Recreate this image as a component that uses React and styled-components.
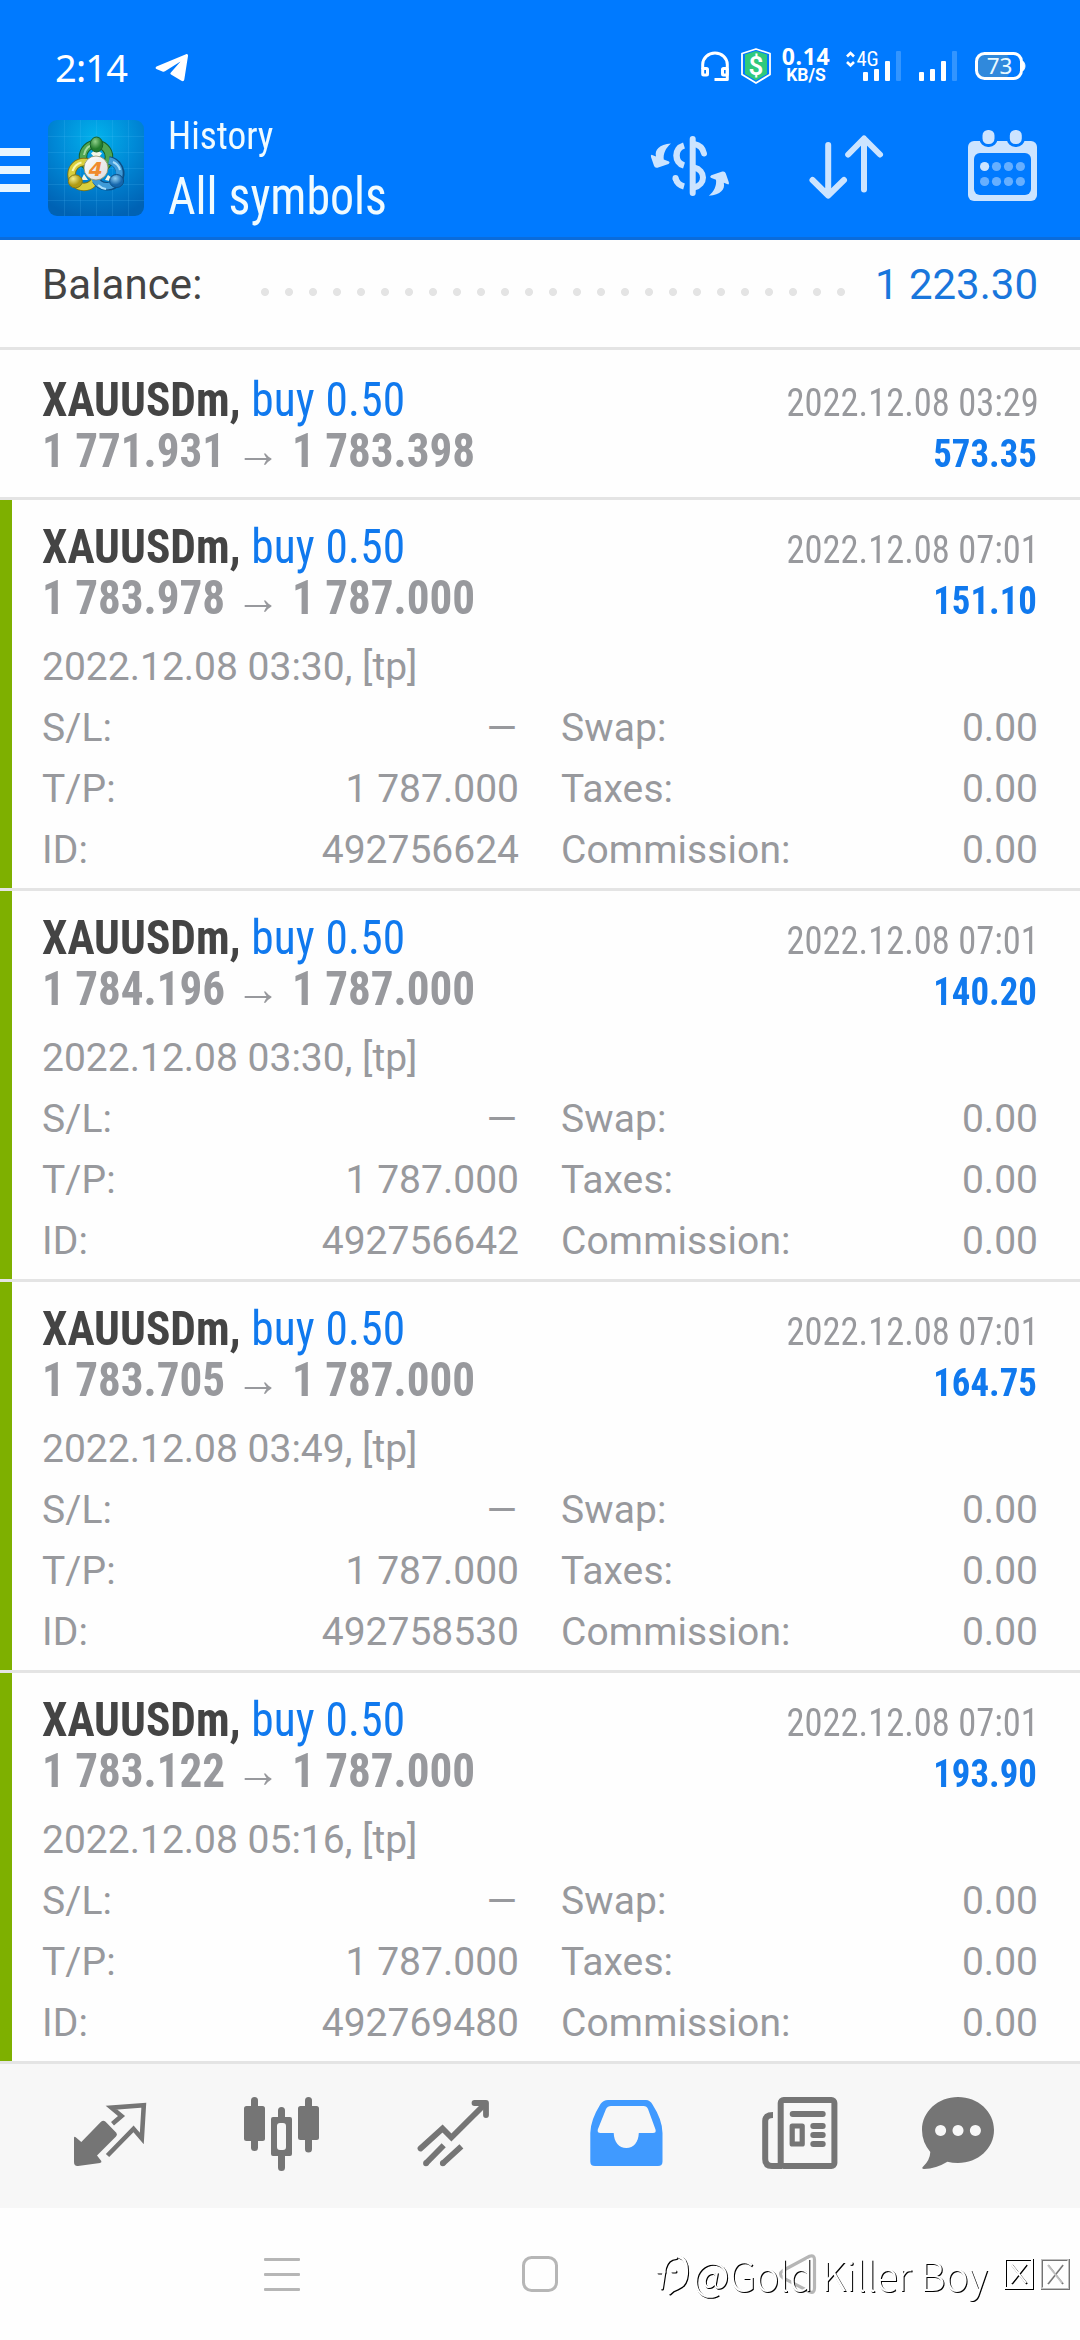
import React from "react";
import styled, { createGlobalStyle } from "styled-components";

const color = {
  header: "#007aff",
  headerEdge: "#0a6cdc",
  tint: "#cce4ff",
  ink: "#444444",
  blue: "#1079ee",
  balance: "#1976dc",
  grey: "#98999d",
  line: "#e4e4e4",
  green: "#7eb000",
  icon: "#757575",
  active: "#409aff",
  nav: "#b6b6b6",
};

const condensed = `"Roboto Condensed", Roboto, sans-serif`;

const GlobalStyle = createGlobalStyle`
  *, *::before, *::after { box-sizing: border-box; }
  body { margin: 0; background: #fefefe; font-family: Roboto, sans-serif; }
  svg { display: block; flex: none; }
`;

const Screen = styled.div`
  display: flex;
  flex-direction: column;
  width: 1080px;
  height: 2340px;
  overflow: hidden;
  background: #fefefe;
`;

/* ---------- header ---------- */

const Header = styled.header`
  display: flex;
  flex-direction: column;
  height: 240px;
  background: ${color.header};
  border-bottom: 3px solid ${color.headerEdge};
`;

const StatusBar = styled.div`
  display: flex;
  align-items: center;
  height: 104px;
  padding: 28px 54px 0 55px;
  color: #fff;
  font-family: "Noto Sans", sans-serif;
`;

const Clock = styled.span`
  margin: 2px 28px 0 0;
  font-size: 38px;
  line-height: 48px;
  letter-spacing: -0.8px;
`;

const StatusIcons = styled.div`
  display: flex;
  align-items: center;
  margin-left: auto;
`;

const Speed = styled.div`
  display: flex;
  flex-direction: column;
  align-items: center;
  width: 50px;
  margin: 0 14px 0 10px;
  font-weight: 700;
  white-space: nowrap;
`;

const SpeedValue = styled.span`
  font-size: 23px;
  line-height: 19px;
  letter-spacing: 0.6px;
`;

const SpeedUnit = styled.span`
  font-family: Roboto, sans-serif;
  font-size: 17.5px;
  line-height: 19px;
`;

const AppBar = styled.div`
  display: flex;
  align-items: center;
  height: 133px;
  padding: 0 42px 5px 0;
`;

const MenuButton = styled.div`
  display: flex;
  flex-direction: column;
  gap: 10px;
  width: 30px;
  margin: 4px 18px 0 0;
`;

const MenuBar = styled.span`
  height: 8px;
  background: #e8f6ff;
`;

const Titles = styled.div`
  display: flex;
  flex-direction: column;
  margin-left: 24px;
  color: #f0fbff;
  font-family: ${condensed};
`;

const Overline = styled.span`
  font-size: 39px;
  line-height: 58px;
  transform: scaleX(0.957);
  transform-origin: left;
`;

const Title = styled.h1`
  margin: 0;
  font-size: 51px;
  font-weight: 400;
  line-height: 64px;
  transform: scaleX(0.939);
  transform-origin: left;
`;

const Tools = styled.div`
  display: flex;
  align-items: center;
  gap: 80px;
  margin: -4px 0 0 auto;
`;

/* ---------- balance ---------- */

const BalanceRow = styled.section`
  display: flex;
  height: 110px;
  padding: 15px 42px 0;
  border-bottom: 3px solid ${color.line};
  font-size: 42px;
  line-height: 60px;
`;

const BalanceLabel = styled.span`
  width: 211px;
  color: ${color.ink};
  letter-spacing: 0.1px;
`;

const Leader = styled.span`
  width: 600px;
  height: 24px;
  margin-top: 25px;
  background: radial-gradient(circle, ${color.line} 3.6px, transparent 4.4px) 0 0 / 24px 24px;
`;

const BalanceValue = styled.span`
  margin-left: auto;
  color: ${color.balance};
`;

/* ---------- deals ---------- */

const Deal = styled.article`
  padding: ${(p) => (p.$open ? "21px 42px 9px" : "24px 42px 21px")};
  border-bottom: 3px solid ${color.line};
  box-shadow: ${(p) => (p.$open ? `inset 12px 0 0 ${color.green}` : "none")};
`;

const Line = styled.div`
  display: flex;
  align-items: baseline;
  justify-content: space-between;
  height: 51px;
  font-family: ${condensed};
  font-size: 48px;
  line-height: 51px;
  white-space: pre;
`;

const Instrument = styled.span`
  transform: scaleX(0.945);
  transform-origin: left;
`;

const SymbolName = styled.b`
  color: ${color.ink};
`;

const Side = styled.span`
  color: ${color.blue};
  letter-spacing: 0.2px;
`;

const Prices = styled.b`
  color: ${color.grey};
  transform: scaleX(0.94);
  transform-origin: left;
`;

const Arrow = styled.span`
  margin-right: 1px;
`;

const ClosedAt = styled.time`
  margin-right: -1px;
  color: ${color.grey};
  font-size: 39px;
  transform: scaleX(0.935);
  transform-origin: right;
`;

const Profit = styled.b`
  margin-right: 1px;
  color: ${color.blue};
  font-size: 39px;
  transform: scaleX(0.943);
  transform-origin: right;
`;

const Details = styled.div`
  padding-top: 14px;
  color: ${color.grey};
  font-size: 39px;
  line-height: 61px;
`;

const Columns = styled.dl`
  display: grid;
  grid-template-columns: 1fr 1fr;
  grid-template-rows: 61px 61px 59px;
  column-gap: 42px;
  margin: 0;
`;

const Field = styled.div`
  display: flex;
  justify-content: space-between;
  line-height: ${(p) => (p.$last ? "60px" : "61px")};
`;

const Label = styled.dt`
  letter-spacing: 0.1px;
`;

const Value = styled.dd`
  margin: 0;
  padding-right: ${(p) => (p.$empty ? "2px" : "0")};
`;

/* ---------- bottom ---------- */

const TabBar = styled.nav`
  display: grid;
  grid-template-columns: repeat(6, 1fr);
  align-items: center;
  justify-items: center;
  height: 144px;
  padding: 0 24px;
  background: #f7f7f7;
`;

const SystemBar = styled.footer`
  position: relative;
  display: grid;
  grid-template-columns: repeat(3, 258px);
  align-items: center;
  justify-items: center;
  justify-content: center;
  height: 132px;
`;

const Watermark = styled.div`
  position: absolute;
  top: 38px;
  left: 655px;
  display: flex;
  align-items: center;
  height: 56px;
  color: #fff;
  font-family: "Noto Sans CJK SC", sans-serif;
  font-size: 40px;
  font-weight: 300;
  line-height: 56px;
  letter-spacing: -0.41px;
  white-space: nowrap;
  filter: drop-shadow(1px 1px 0 #000);
`;

const WatermarkName = styled.span`
  margin: 0 17px 0 2px;
`;

/* ---------- icons ---------- */

const TelegramIcon = () => (
  <svg width="34" height="36" viewBox="0 0 34 36" fill="#fff">
    <path d="M1.5 18.5 31 6.2c1.2-.4 2.200.3 2 1.800L29.300 31.500c-.3 1.700-1.500 2.100-2.900 1.200L16 26.500c-.8-.6-.8-1.300-.1-2L25.500 13.500 10 23.300c-.8.5-1.700.5-2.600.2L1.900 21.300c-1.600-.6-1.700-1.900-.4-2.800z" />
  </svg>
);

const HeadsetIcon = () => (
  <svg width="28" height="36" viewBox="0 0 28 36" fill="none" stroke="#fff" strokeWidth="3">
    <path d="M1.700 21V16.500A12.300 11.500 0 0 1 26.300 16.500V31.500H13.500" strokeLinejoin="round" />
    <rect x="1.700" y="20.500" width="4.800" height="6.500" rx="1" />
    <rect x="21.500" y="20.500" width="4.800" height="6.500" rx="1" />
  </svg>
);

const ShieldIcon = () => (
  <svg width="30" height="36" viewBox="0 0 30 36">
    <path d="M15 1 29 5.500V26.500L15 35 1 26.500V5.500z" fill="none" stroke="#fff" strokeWidth="1.800" strokeLinejoin="round" />
    <path d="M15 3 26 6.500V26L15 32.500 4 26V6.500z" fill="#2fc97c" />
    <text x="15" y="27.200" textAnchor="middle" fill="#fff" fontFamily="Roboto" fontWeight="600" fontSize="26">$</text>
  </svg>
);

const SignalBars = ({ network }) => (
  <svg width={network ? 58 : 39} height="36" viewBox={network ? "0 0 58 36" : "17 0 39 36"} fill="#fff">
    {network && (
      <>
        <path d="M2 8.500 5.500 5 9 8.500M2 14 5.500 17.500 9 14" fill="none" stroke="#fff" strokeWidth="2.600" />
        <text x="11.500" y="18.300" fontFamily="Roboto Condensed" fontSize="20.500">{network}</text>
      </>
    )}
    <rect x="18" y="24" width="5" height="9" rx="1" />
    <rect x="29" y="21" width="5" height="12" rx="1" />
    <rect x="40" y="13" width="5" height="20" rx="1" />
    <rect x="51" y="3" width="5" height="30" rx="1" fill="#3395ff" />
  </svg>
);

const BatteryIcon = ({ level }) => (
  <svg width="51" height="36" viewBox="0 0 51 36">
    <rect x="3" y="5.500" width="31" height="25" rx="6" fill="#3089dc" />
    <rect x="1.500" y="5.500" width="45" height="25" rx="8" fill="none" stroke="#fff" strokeWidth="3" />
    <path d="M48 13.500c2.600 1.500 2.600 7.500 0 9z" fill="#fff" stroke="#fff" />
    <text x="24.500" y="25.500" textAnchor="middle" fill="#eafaff" fontFamily="Noto Sans" fontSize="22.500">{level}</text>
  </svg>
);

const Logo = () => (
  <svg width="96" height="96" viewBox="0 0 96 96">
    <defs>
      <radialGradient id="sky" cx="50%" cy="18%" r="85%">
        <stop offset="0" stopColor="#02b2ec" />
        <stop offset="0.5" stopColor="#0088d6" />
        <stop offset="1" stopColor="#0062b4" />
      </radialGradient>
      <radialGradient id="leaf" cx="40%" cy="30%">
        <stop offset="0" stopColor="#8fd08a" />
        <stop offset="1" stopColor="#237c2c" />
      </radialGradient>
      <radialGradient id="gold" cx="35%" cy="30%">
        <stop offset="0" stopColor="#f4ee8a" />
        <stop offset="1" stopColor="#b09a14" />
      </radialGradient>
      <radialGradient id="wave" cx="40%" cy="30%">
        <stop offset="0" stopColor="#8fd0f4" />
        <stop offset="1" stopColor="#1566ac" />
      </radialGradient>
      <linearGradient id="disc" x1="0" y1="0" x2="1" y2="1">
        <stop offset="0" stopColor="#ffffff" />
        <stop offset="1" stopColor="#dcdcdc" />
      </linearGradient>
    </defs>
    <rect width="96" height="96" rx="9" fill="url(#sky)" />
    <path d="M16.500 0V96M32.500 0V96M48.500 0V96M64.500 0V96M80.500 0V96M0 16.500H96M0 32.500H96M0 48.500H96M0 64.500H96M0 80.500H96" stroke="#5cc8ff" strokeOpacity="0.16" />
    <g fill="none">
      <circle cx="48" cy="37" r="13" stroke="#17602a" strokeWidth="8.500" />
      <circle cx="48" cy="37" r="13" stroke="#4fa653" strokeWidth="6.500" />
      <path d="M36 35a12.500 12.500 0 0 1 11-11" stroke="#a6dba0" strokeWidth="2" />
      <circle cx="36" cy="54.500" r="12.500" stroke="#7d7414" strokeWidth="8.500" />
      <circle cx="36" cy="54.500" r="12.500" stroke="#d9cf3e" strokeWidth="6.500" />
      <path d="M24.500 51a12.500 12.500 0 0 1 9-8.500" stroke="#fbf8b0" strokeWidth="2" />
      <path d="M61 40.500A13 13 0 1 1 48 60" stroke="#0c4f86" strokeWidth="8.500" />
      <path d="M61 40.500A13 13 0 1 1 46 57" stroke="#3f9bd8" strokeWidth="6.500" />
      <path d="M65 42a12 12 0 0 1 7 8M50 65a14 14 0 0 0 8 4" stroke="#a9defa" strokeWidth="2" />
    </g>
    <path d="M43 33.500 48 29l6 4.500-3 3.500h-5zM33 60l3-6 4 6zM57 60l3-5 4 3-2 3z" fill="#f2f5e6" />
    <ellipse cx="48.500" cy="24.500" rx="6.300" ry="7.500" fill="url(#leaf)" stroke="#17602a" />
    <ellipse cx="27.300" cy="61.300" rx="7" ry="6.500" fill="url(#gold)" stroke="#857a18" />
    <ellipse cx="68.600" cy="61" rx="7" ry="6.500" fill="url(#wave)" stroke="#0c4f86" />
    <circle cx="48" cy="48" r="12" fill="url(#disc)" stroke="#8f8f6a" strokeWidth="0.800" />
    <text x="47.800" y="55.500" textAnchor="middle" fill="#f08a2c" fontFamily="DejaVu Sans" fontStyle="italic" fontWeight="700" fontSize="20">4</text>
  </svg>
);

const CurrencyIcon = () => (
  <svg width="80" height="60" viewBox="-5 0 80 60" overflow="visible">
    <g fill="none" stroke={color.tint} strokeWidth="6">
      <path d="M41.700 3V57" strokeLinecap="round" />
      <path d="M33 9.500C23 12.500 23 26.500 33 29.500" strokeWidth="6.500" />
      <path d="M24.500 42Q26 48.500 33 50.500" />
      <path d="M43 8Q51.500 9.500 53 17.500M24.500 42.500V42" strokeLinecap="round" />
      <path d="M43 31.500C55 34 55 49 43 51.500" />
    </g>
    <g fill={color.tint}>
      <path id="swapArrow" d="M20 7.500C8 8.500 3.500 14 5 20.500L.5 18.800Q-.5 19 0 21L3 29.800Q3.800 32.300 6.500 31.700L17.500 27.900Q19.500 26.700 18 25.500L12.800 23.500C12 18 14.500 12 20 7.500Z" />
      <use href="#swapArrow" transform="rotate(180 38.900 33.600)" />
    </g>
  </svg>
);

const SortIcon = () => (
  <svg width="80" height="68" viewBox="0 0 80 68" fill="none" stroke={color.tint} strokeWidth="6" strokeLinecap="round" strokeLinejoin="round">
    <path d="M22.200 13V62M6.500 48 22.200 63.500 38 48" />
    <path d="M58 57.500V7M42.200 22.500 58 6.500 74 22.500" />
  </svg>
);

const CalendarIcon = () => (
  <svg width="72" height="74" viewBox="0 0 72 74">
    <rect x="2" y="12" width="69" height="60" rx="6" fill={color.tint} />
    <rect x="8" y="24" width="57" height="42" rx="6" fill={color.header} />
    {[16.500, 43.800].map((x) => (
      <rect key={x} x={x - 1.500} y="-0.500" width="15" height="17" rx="7" fill={color.tint} stroke={color.header} strokeWidth="3" />
    ))}
    {[37.500, 52.500].map((y) =>
      [18.600, 30.500, 42.500, 54.400].map((x) => (
        <circle key={`${x}-${y}`} cx={x} cy={y} r="4.600" fill={x < 20 && y < 40 ? color.tint : "#66afff"} />
      ))
    )}
  </svg>
);

const TabSvg = styled.svg.attrs({ viewBox: "0 0 96 96", width: 96, height: 96 })`
  color: ${(p) => (p.$active ? color.active : color.icon)};
`;

const QuotesIcon = () => (
  <TabSvg fill="currentColor">
    <path d="M12 49.500Q12.500 48 14 49.500L19.300 54 39 33.800Q41.300 31.700 43.600 33.800L54.300 44.800Q55.800 46.700 54 48.600L35 67.500 39.300 73Q40 74.500 38 75L16 78Q12 78.300 12 74z" />
    <path d="M50.500 35.700 59.500 28 49.500 19.700 81.800 17.200 79.800 50.500 71.500 40.800 45.500 67.500" fill="none" stroke="currentColor" strokeWidth="4.600" strokeLinejoin="miter" />
  </TabSvg>
);

const ChartIcon = () => (
  <TabSvg fill="currentColor">
    <rect x="10" y="18" width="21" height="35" rx="2.500" />
    <rect x="17" y="9" width="7" height="54" rx="3.500" />
    <path fillRule="evenodd" d="M39 29H56Q58 29 58 31V66Q58 68 56 68H39Q37 68 37 66V31Q37 29 39 29ZM46 35Q43 35 43 38V59Q43 62 46 62H49Q52 62 52 59V38Q52 35 49 35Z" />
    <path d="M44 32V22.500A3.500 3.500 0 0 1 51 22.500V32zM44 65V79.500A3.500 3.500 0 0 0 51 79.500V65z" />
    <rect x="64" y="18" width="21" height="34" rx="2.500" />
    <rect x="71" y="9" width="7" height="55.500" rx="3.500" />
  </TabSvg>
);

const TradeIcon = () => (
  <TabSvg fill="none" stroke="currentColor" strokeWidth="5.800">
    <path d="M14.500 60.500 36.500 40.500 45.400 49.500 78.500 16.500" strokeLinecap="round" strokeLinejoin="miter" />
    <path d="M68.500 15H80V27" strokeLinecap="round" strokeLinejoin="round" />
    <path d="M20 75.300 37.700 57.300M36.800 75.300 55.400 58.300" />
    <path d="M20 75.300V75.200M36.800 75.300V75.200" strokeLinecap="round" />
  </TabSvg>
);

const HistoryIcon = () => (
  <TabSvg $active fill="currentColor">
    <path fillRule="evenodd" d="M30 12H68Q72 12 74.500 16.500Q84.500 32 84.500 45V73.500Q84.500 78 80 78H17Q12.300 78 12.300 73.500V45Q12.500 32 22.500 16Q25.500 12 30 12ZM33 18Q29.500 18 28 21L19.800 41.500Q19 45 22.500 45H35.700C36 54 41 60 48.300 60S60.500 54 60.800 45H75Q78.500 45 77.500 41.500L70 21Q68.800 18 65.500 18Z" />
  </TabSvg>
);

const NewsIcon = () => (
  <TabSvg fill="none" stroke="currentColor" strokeWidth="6">
    <rect x="30.700" y="12" width="53.700" height="66" rx="3" />
    <path d="M23 27Q15.200 27 15.200 33V71Q15.200 78 22 78H32" />
    <path d="M42.700 26H72.700M63.300 38H72.700M63.300 47H72.700M63.300 56H72.700" strokeLinecap="round" />
    <rect x="42.200" y="38" width="10" height="18" strokeWidth="5.200" strokeLinejoin="round" />
  </TabSvg>
);

const ChatIcon = () => (
  <TabSvg fill="currentColor">
    <path fillRule="evenodd" d="M36 9C56 9 72 23.500 72 42S56 75 36 75Q30.500 75 25.400 73.800Q14 80.800 2 81Q-1 80.500 1.200 78.500Q8 72 8.300 64Q0 54 0 42C0 23.500 16 9 36 9ZM18.600 37a5.500 5.500 0 1 0 .01 0ZM36 37a5.500 5.500 0 1 0 .01 0ZM53.400 37a5.500 5.500 0 1 0 .01 0Z" />
  </TabSvg>
);

const RecentsIcon = () => (
  <svg width="36" height="36" viewBox="0 0 36 36" fill={color.nav}>
    <rect y="2" width="36" height="3" rx="1" />
    <rect y="17" width="36" height="3" rx="1" />
    <rect y="32" width="36" height="3" rx="1" />
  </svg>
);

const HomeIcon = () => (
  <svg width="36" height="36" viewBox="0 0 36 36">
    <rect x="1.500" y="1.500" width="33" height="33" rx="8" fill="none" stroke={color.nav} strokeWidth="3" />
  </svg>
);

const BackIcon = () => (
  <svg width="60" height="60" viewBox="-2 0 60 60">
    <path d="M13 26.500 39.500 12.300Q44.500 10.500 44.500 16V44Q44.500 50 39.500 47.700L13 33.800Q8 30 13 26.500Z" fill="none" stroke={color.nav} strokeWidth="3.200" />
  </svg>
);

const NoteMark = () => (
  <svg width="36" height="44" viewBox="0 8 36 44" fill="none" stroke="#fff" strokeWidth="3" strokeLinecap="round" overflow="visible">
    <path d="M6.500 44 9.500 24Q12 14 21 13.500M24 12.500Q32.500 15 31.500 30Q30.500 41 22 44Q17 45.500 14.500 49" />
    <path d="M3 28H9M17 27H20" />
  </svg>
);

const MissingGlyph = styled.svg.attrs({ width: 36, height: 34, viewBox: "0 0 36 34" })`
  opacity: ${(p) => (p.$faint ? 0.55 : 1)};
`;

const GlyphBox = ({ faint }) => (
  <MissingGlyph $faint={faint} fill="none" stroke="#fff" strokeWidth="2">
    <rect x="1" y="2" width="27" height="29" />
    <path d="M7 7 22 26M22 7 7 26" />
  </MissingGlyph>
);

/* ---------- data ---------- */

const deals = [
  { open: "1 771.931", close: "1 783.398", closedAt: "2022.12.08 03:29", profit: "573.35" },
  { open: "1 783.978", close: "1 787.000", closedAt: "2022.12.08 07:01", profit: "151.10", note: "2022.12.08 03:30, [tp]", id: "492756624" },
  { open: "1 784.196", close: "1 787.000", closedAt: "2022.12.08 07:01", profit: "140.20", note: "2022.12.08 03:30, [tp]", id: "492756642" },
  { open: "1 783.705", close: "1 787.000", closedAt: "2022.12.08 07:01", profit: "164.75", note: "2022.12.08 03:49, [tp]", id: "492758530" },
  { open: "1 783.122", close: "1 787.000", closedAt: "2022.12.08 07:01", profit: "193.90", note: "2022.12.08 05:16, [tp]", id: "492769480" },
];

function DealRow({ deal }) {
  const fields = [
    ["S/L:", "—"],
    ["Swap:", "0.00"],
    ["T/P:", deal.close],
    ["Taxes:", "0.00"],
    ["ID:", deal.id],
    ["Commission:", "0.00"],
  ];
  return (
    <Deal $open={Boolean(deal.note)}>
      <Line>
        <Instrument>
          <SymbolName>XAUUSDm, </SymbolName>
          <Side>buy 0.50</Side>
        </Instrument>
        <ClosedAt>{deal.closedAt}</ClosedAt>
      </Line>
      <Line>
        <Prices>
          {deal.open} <Arrow>→</Arrow> {deal.close}
        </Prices>
        <Profit>{deal.profit}</Profit>
      </Line>
      {deal.note && (
        <Details>
          <div>{deal.note}</div>
          <Columns>
            {fields.map(([label, value], i) => (
              <Field key={label} $last={i > 3}>
                <Label>{label}</Label>
                <Value $empty={value === "—"}>{value}</Value>
              </Field>
            ))}
          </Columns>
        </Details>
      )}
    </Deal>
  );
}

const Gap = styled.div`
  margin-left: ${(p) => p.$size}px;
`;

export default function App() {
  return (
    <Screen>
      <GlobalStyle />
      <Header>
        <StatusBar>
          <Clock>2:14</Clock>
          <TelegramIcon />
          <StatusIcons>
            <HeadsetIcon />
            <Gap $size={12}><ShieldIcon /></Gap>
            <Speed>
              <SpeedValue>0.14</SpeedValue>
              <SpeedUnit>KB/S</SpeedUnit>
            </Speed>
            <SignalBars network="4G" />
            <Gap $size={15}><SignalBars /></Gap>
            <Gap $size={18}><BatteryIcon level="73" /></Gap>
          </StatusIcons>
        </StatusBar>
        <AppBar>
          <MenuButton>
            <MenuBar />
            <MenuBar />
            <MenuBar />
          </MenuButton>
          <Logo />
          <Titles>
            <Overline>History</Overline>
            <Title>All symbols</Title>
          </Titles>
          <Tools>
            <CurrencyIcon />
            <SortIcon />
            <CalendarIcon />
          </Tools>
        </AppBar>
      </Header>

      <BalanceRow>
        <BalanceLabel>Balance:</BalanceLabel>
        <Leader />
        <BalanceValue>1 223.30</BalanceValue>
      </BalanceRow>

      {deals.map((deal) => (
        <DealRow key={deal.id || "first"} deal={deal} />
      ))}

      <TabBar>
        <QuotesIcon />
        <ChartIcon />
        <TradeIcon />
        <HistoryIcon />
        <NewsIcon />
        <ChatIcon />
      </TabBar>

      <SystemBar>
        <RecentsIcon />
        <HomeIcon />
        <BackIcon />
        <Watermark>
          <NoteMark />
          <WatermarkName>@Gold Killer Boy</WatermarkName>
          <GlyphBox />
          <GlyphBox faint />
        </Watermark>
      </SystemBar>
    </Screen>
  );
}
